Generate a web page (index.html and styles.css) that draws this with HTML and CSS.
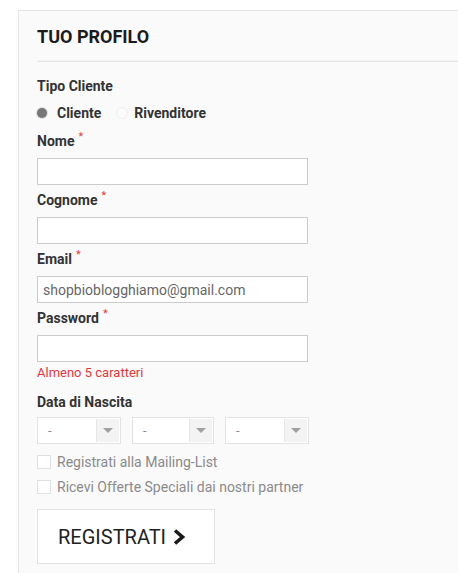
FILE: index.html
```html
<!DOCTYPE html>
<html lang="it">
<head>
<meta charset="utf-8">
<title>Tuo Profilo</title>
<link rel="stylesheet" href="styles.css">
</head>
<body>
<div class="panel">
  <div class="panel-head"><h2 class="title">TUO PROFILO</h2></div>
  <form class="form">
    <div class="label label-first">Tipo Cliente</div>
    <div class="radios">
      <span class="radio radio-on"></span><span class="radio-text">Cliente</span>
      <span class="radio radio-off"></span><span class="radio-text">Rivenditore</span>
    </div>
    <div class="label">Nome<span class="req">*</span></div>
    <div class="input"></div>
    <div class="label">Cognome<span class="req">*</span></div>
    <div class="input"></div>
    <div class="label">Email<span class="req">*</span></div>
    <div class="input"><span class="input-text">shopbioblogghiamo@gmail.com</span></div>
    <div class="label">Password<span class="req">*</span></div>
    <div class="input"></div>
    <div class="hint">Almeno 5 caratteri</div>
    <div class="label label-date">Data di Nascita</div>
    <div class="selects">
      <div class="sel sel-w84"><span class="sel-val">-</span><span class="sel-arrow"><span class="tri"></span></span></div>
      <div class="sel sel-w82"><span class="sel-val">-</span><span class="sel-arrow"><span class="tri"></span></span></div>
      <div class="sel sel-w84"><span class="sel-val">-</span><span class="sel-arrow"><span class="tri"></span></span></div>
    </div>
    <div class="checks">
      <div class="check-row"><span class="box"></span><span class="check-text">Registrati alla Mailing-List</span></div>
      <div class="check-row"><span class="box"></span><span class="check-text">Ricevi Offerte Speciali dai nostri partner</span></div>
    </div>
    <div class="button">REGISTRATI <svg class="chev" width="14" height="16" viewBox="0 0 14 16"><path d="M3 1.5 L10.5 8 L3 14.5" fill="none" stroke="#1a1a1a" stroke-width="3.6" stroke-linejoin="miter"/></svg></div>
  </form>
</div>
</body>
</html>
```
FILE: styles.css
```css
html, body {
  margin: 0;
  padding: 0;
  background: #ffffff;
}
body {
  font-family: Roboto, "Liberation Sans", Arial, sans-serif;
  color: #333;
  overflow: hidden;
}
.panel {
  margin: 10px 0 0 18px;
  width: 460px;
  height: 562px;
  background: #fafafa;
  border-top: 1px solid #e3e3e3;
  border-left: 1px solid #e6e6e6;
}
.panel-head {
  margin-left: 18px;
  padding: 15px 0 13px;
  border-bottom: 1px solid #e4e4e4;
  box-shadow: 0 -4px 0 -3px #f2f2f2 inset;
}
.title {
  margin: 0;
  font-size: 18px;
  line-height: 22px;
  font-weight: 700;
  color: #1c1c1c;
}
.form {
  padding: 14px 0 0 18px;
}
.label {
  font-size: 14px;
  font-weight: 700;
  line-height: 20px;
  height: 20px;
  color: #333;
  padding: 5px 0 7px;
}
.label-first {
  padding: 0;
}
.label-date {
  padding: 9px 0 5px;
}
.req {
  color: #e03a3a;
  font-size: 11px;
  font-weight: 400;
  line-height: 0;
  vertical-align: 6px;
  margin-left: 4px;
}
.radios {
  display: flex;
  align-items: center;
  height: 20px;
  margin: 7px 0 3px;
  font-size: 14px;
  font-weight: 700;
  color: #333;
}
.radio {
  display: inline-block;
  border-radius: 50%;
  box-sizing: border-box;
}
.radio-on {
  width: 10px;
  height: 10px;
  background: #777;
  box-shadow: 0 0 0 1px #dcdcdc;
  margin-right: 10px;
}
.radio-off {
  width: 12px;
  height: 12px;
  border: 1px solid #efefef;
  background: #fbfbfb;
  margin: 0 6px 0 15px;
}
.input {
  width: 271px;
  height: 27px;
  box-sizing: border-box;
  background: #fff;
  border: 1px solid #cbcbcb;
  display: flex;
  align-items: center;
  padding-left: 5px;
}
.input-text {
  font-size: 14px;
  color: #666;
}
.hint {
  font-size: 13px;
  line-height: 20px;
  color: #e0393e;
  margin-top: 1px;
}
.selects {
  display: flex;
  gap: 11px;
}
.sel {
  height: 27px;
  box-sizing: border-box;
  border: 1px solid #e3e3e3;
  background: #fff;
  display: flex;
  padding: 1px;
}
.sel-w84 { width: 84px; }
.sel-w82 { width: 82px; }
.sel-val {
  flex: 1;
  font-size: 13px;
  color: #888;
  line-height: 23px;
  padding-left: 9px;
}
.sel-arrow {
  width: 22px;
  background: #f3f3f3;
  border-left: 1px solid #e6e6e6;
  display: flex;
  align-items: center;
  justify-content: center;
}
.tri {
  width: 0;
  height: 0;
  border-left: 5px solid transparent;
  border-right: 5px solid transparent;
  border-top: 5px solid #a0a0a0;
}
.checks {
  margin-top: 8px;
  display: flex;
  flex-direction: column;
  gap: 5px;
}
.check-row {
  display: flex;
  align-items: center;
  height: 20px;
}
.box {
  width: 14px;
  height: 14px;
  box-sizing: border-box;
  border: 1px solid #e0e0e0;
  background: #fff;
  margin-right: 6px;
}
.check-text {
  font-size: 14px;
  color: #8a8a8a;
}
.button {
  margin-top: 12px;
  width: 178px;
  height: 55px;
  box-sizing: border-box;
  border: 1px solid #e3e3e3;
  background: #fff;
  display: flex;
  align-items: center;
  padding-left: 20px;
  font-size: 20px;
  color: #222;
}
.chev {
  margin-left: 6px;
}
```
